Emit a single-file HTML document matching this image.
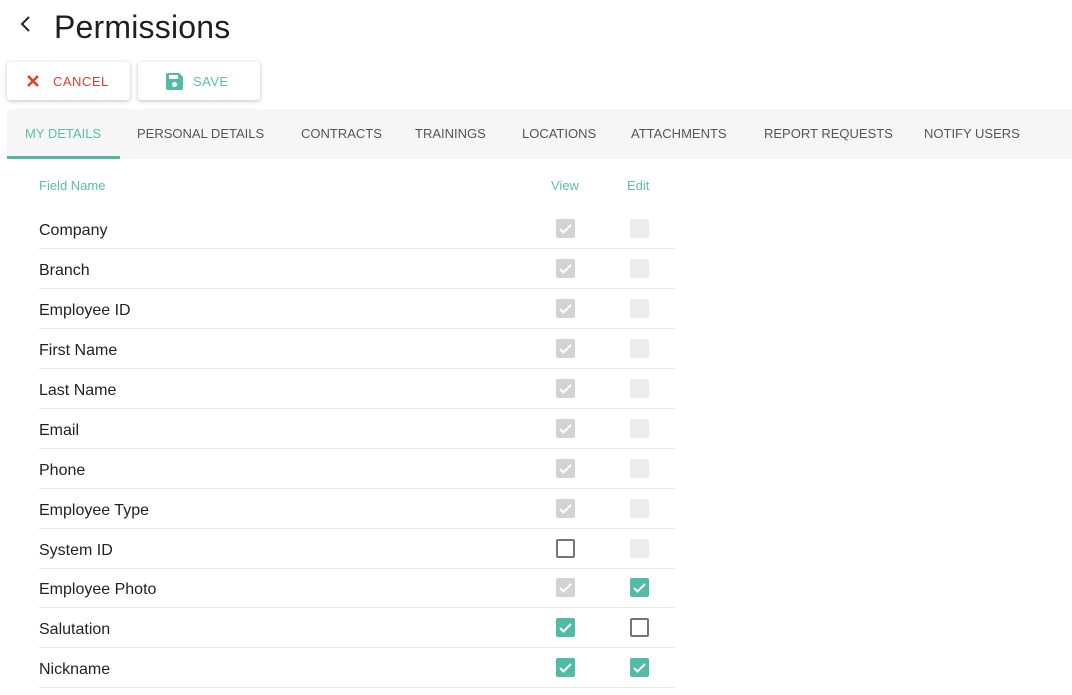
<!DOCTYPE html>
<html><head><meta charset="utf-8">
<style>
*{margin:0;padding:0;box-sizing:border-box}
body{width:1072px;height:695px;background:#fff;font-family:"Liberation Sans",sans-serif;position:relative;overflow:hidden;color:#222}
.abs{position:absolute}
h1{position:absolute;left:54px;top:9px;font-size:32px;font-weight:normal;color:#1f1f1f;letter-spacing:0.2px}
.btn{position:absolute;top:62px;height:38px;border-radius:3px;background:#fff;box-shadow:0 1px 4px rgba(0,0,0,.25);font-size:13px;letter-spacing:.5px;display:flex;align-items:center}
.tabs{position:absolute;left:7px;top:109px;width:1065px;height:50px;background:#f6f6f6}
.tab{position:absolute;top:126px;font-size:13px;color:#555;white-space:nowrap}
.hdr{position:absolute;top:178px;font-size:13px;color:#5bbfa9}
.row{position:absolute;left:39px;width:636px;height:40px;border-bottom:1px solid #e8e8ec}
.lbl{position:absolute;left:0;top:13px;font-size:16px;color:#222}
.cb{position:absolute;width:19px;height:19px;border-radius:2px;top:10px}
.v{left:517px}.e{left:591px}
.gc{background:#d3d3d3}
.ge{background:#ececec}
.un{border:2px solid #757575;background:#fff}
.tc{background:#52bba6}
.cb svg{position:absolute;left:3px;top:4px}
</style></head><body>
<svg class="abs" style="left:18px;top:15px" width="14" height="18" viewBox="0 0 14 18"><path d="M11 2 L4 9 L11 16" fill="none" stroke="#222" stroke-width="2"/></svg>
<h1>Permissions</h1>
<div class="btn" style="left:7px;width:123px;color:#e53a2a">
<svg style="margin-left:19px" width="14" height="14" viewBox="0 0 14 14"><path d="M2 2L12 12M12 2L2 12" stroke="#e53a2a" stroke-width="2.4"/></svg>
<span style="margin-left:13px">CANCEL</span></div>
<div class="btn" style="left:138px;width:122px;color:#5bbfa9">
<svg style="margin-left:28px" width="17" height="17" viewBox="0 0 17 17"><path d="M0 2a2 2 0 0 1 2-2h11l4 4v11a2 2 0 0 1-2 2H2a2 2 0 0 1-2-2z" fill="#52bba6"/><rect x="3" y="2" width="9" height="4" fill="#fff"/><circle cx="8.5" cy="11.5" r="2.5" fill="#fff"/></svg>
<span style="margin-left:10px">SAVE</span></div>
<div class="tabs"><div class="abs" style="left:0;top:47px;width:113px;height:3px;background:#52bba6"></div></div>
<div class="tab" style="left:25px;color:#5bbfa9">MY DETAILS</div>
<div class="tab" style="left:137px">PERSONAL DETAILS</div>
<div class="tab" style="left:301px">CONTRACTS</div>
<div class="tab" style="left:415px">TRAININGS</div>
<div class="tab" style="left:522px">LOCATIONS</div>
<div class="tab" style="left:631px">ATTACHMENTS</div>
<div class="tab" style="left:764px">REPORT REQUESTS</div>
<div class="tab" style="left:924px">NOTIFY USERS</div>
<div class="hdr" style="left:39px">Field Name</div>
<div class="hdr" style="left:551px">View</div>
<div class="hdr" style="left:627px">Edit</div>
<svg width="0" height="0" style="position:absolute"><defs><path id="ck" d="M1 6l3.5 3.5L12 2" fill="none" stroke="#fff" stroke-width="2"/></defs></svg>

<div class="row" style="top:209px"><div class="lbl">Company</div><div class="cb v gc"><svg width="13" height="12"><use href="#ck"/></svg></div><div class="cb e ge"></div></div>
<div class="row" style="top:249px"><div class="lbl">Branch</div><div class="cb v gc"><svg width="13" height="12"><use href="#ck"/></svg></div><div class="cb e ge"></div></div>
<div class="row" style="top:289px"><div class="lbl">Employee ID</div><div class="cb v gc"><svg width="13" height="12"><use href="#ck"/></svg></div><div class="cb e ge"></div></div>
<div class="row" style="top:329px"><div class="lbl">First Name</div><div class="cb v gc"><svg width="13" height="12"><use href="#ck"/></svg></div><div class="cb e ge"></div></div>
<div class="row" style="top:369px"><div class="lbl">Last Name</div><div class="cb v gc"><svg width="13" height="12"><use href="#ck"/></svg></div><div class="cb e ge"></div></div>
<div class="row" style="top:409px"><div class="lbl">Email</div><div class="cb v gc"><svg width="13" height="12"><use href="#ck"/></svg></div><div class="cb e ge"></div></div>
<div class="row" style="top:449px"><div class="lbl">Phone</div><div class="cb v gc"><svg width="13" height="12"><use href="#ck"/></svg></div><div class="cb e ge"></div></div>
<div class="row" style="top:489px"><div class="lbl">Employee Type</div><div class="cb v gc"><svg width="13" height="12"><use href="#ck"/></svg></div><div class="cb e ge"></div></div>
<div class="row" style="top:529px"><div class="lbl">System ID</div><div class="cb v un"></div><div class="cb e ge"></div></div>
<div class="row" style="top:568px"><div class="lbl">Employee Photo</div><div class="cb v gc"><svg width="13" height="12"><use href="#ck"/></svg></div><div class="cb e tc"><svg width="13" height="12"><use href="#ck"/></svg></div></div>
<div class="row" style="top:608px"><div class="lbl">Salutation</div><div class="cb v tc"><svg width="13" height="12"><use href="#ck"/></svg></div><div class="cb e un"></div></div>
<div class="row" style="top:648px"><div class="lbl">Nickname</div><div class="cb v tc"><svg width="13" height="12"><use href="#ck"/></svg></div><div class="cb e tc"><svg width="13" height="12"><use href="#ck"/></svg></div></div>
</body></html>
